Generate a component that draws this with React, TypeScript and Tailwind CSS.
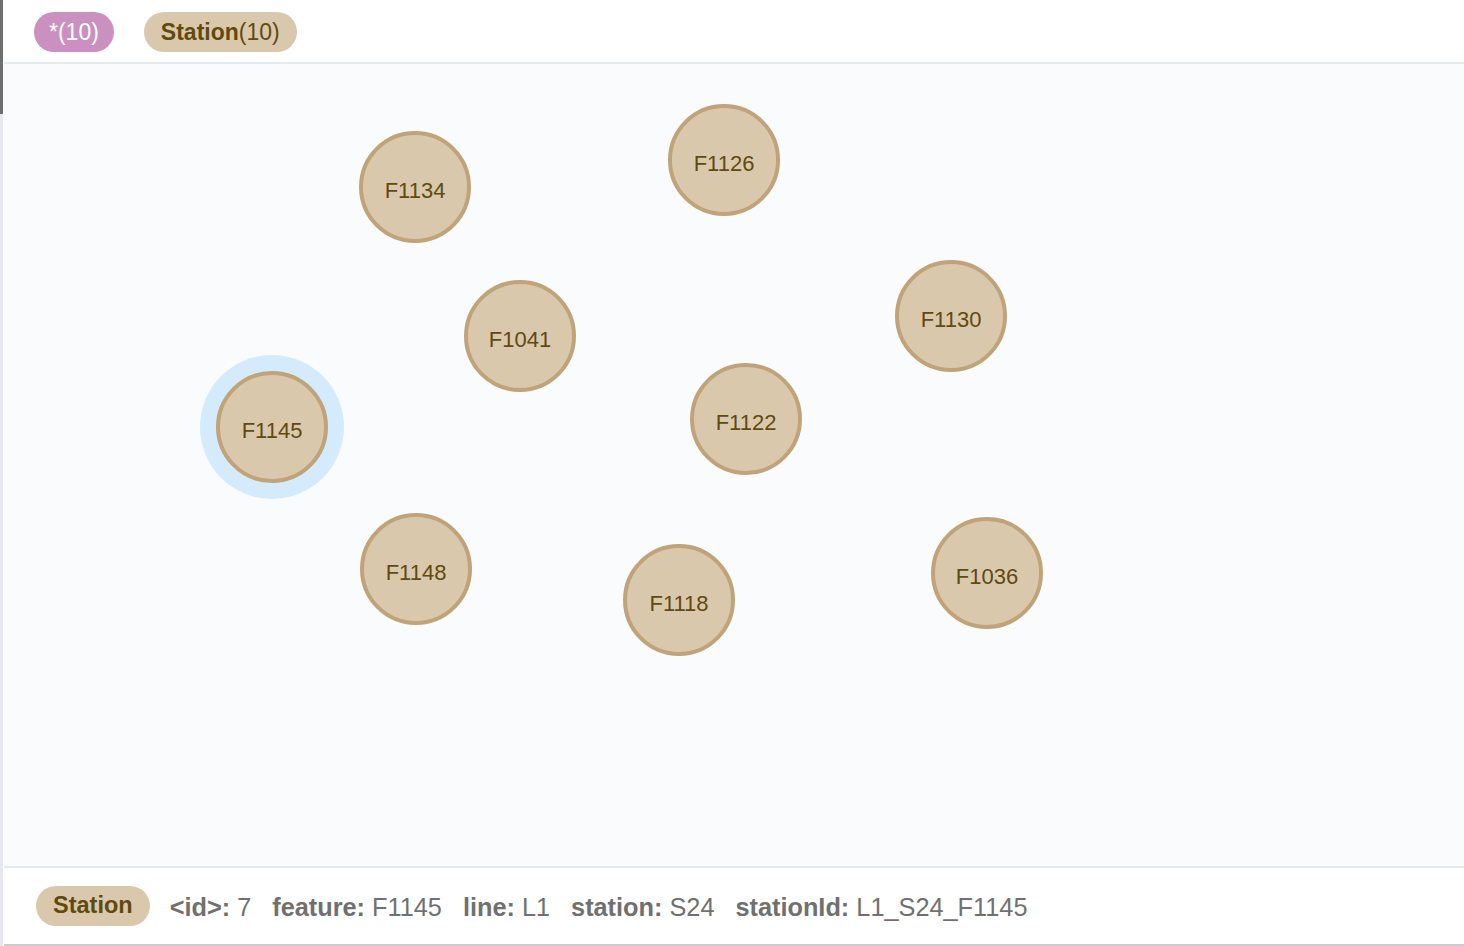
import React from "react";

const nodes = [
  { id: "F1134", x: 415, y: 187 },
  { id: "F1126", x: 724, y: 160 },
  { id: "F1041", x: 520, y: 336 },
  { id: "F1130", x: 951, y: 316 },
  { id: "F1145", x: 272, y: 427, selected: true },
  { id: "F1122", x: 746, y: 419 },
  { id: "F1148", x: 416, y: 569 },
  { id: "F1118", x: 679, y: 600 },
  { id: "F1036", x: 987, y: 573 },
];

const props: [string, string][] = [
  ["<id>:", "7"],
  ["feature:", "F1145"],
  ["line:", "L1"],
  ["station:", "S24"],
  ["stationId:", "L1_S24_F1145"],
];

export default function App() {
  const ox = 4;
  const oy = 64;
  return (
    <div
      className="flex h-[946px] w-[1464px] overflow-hidden bg-white"
      style={{ fontFamily: '"Liberation Sans", Arial, sans-serif' }}
    >
      <div className="flex w-[3px] flex-col bg-[#e7e8ef]">
        <div className="h-[114px] bg-[#6e6e6e]" />
      </div>
      <div className="w-px bg-white" />
      <div className="flex flex-1 flex-col">
        <div className="flex h-[64px] items-center gap-[30px] border-b-2 border-[#e6e9ee] pl-[30px] pt-[2px]">
          <div className="flex h-[40px] items-center rounded-full bg-[#c990c0] px-[15px] text-[23px] leading-none text-white">
            *(10)
          </div>
          <div className="flex h-[40px] items-center rounded-full bg-[#dac8ad] px-[17px] text-[23px] leading-none text-[#604a0e]">
            <span className="font-bold">Station</span>
            <span>(10)</span>
          </div>
        </div>
        <div className="relative flex-1 bg-[#f9fbfd]">
          <svg className="absolute inset-0 h-full w-full">
            {nodes.map((n) => (
              <g key={n.id} transform={`translate(${n.x - ox},${n.y - oy})`}>
                {n.selected && <circle r={72} fill="#d3ebfd" />}
                <circle r={54} fill="#dac8ad" stroke="#c0a378" strokeWidth={4} />
                <text
                  textAnchor="middle"
                  dominantBaseline="central"
                  y={3}
                  fontSize={22}
                  fill="#604a0e"
                  fontFamily='"Liberation Sans", Arial, sans-serif'
                >
                  {n.id}
                </text>
              </g>
            ))}
          </svg>
        </div>
        <div className="flex h-[78px] items-center border-t-2 border-[#e6e9ee] pl-[32px]">
          <div className="flex h-[40px] items-center rounded-full bg-[#dac8ad] px-[17px] text-[23.5px] font-bold leading-none text-[#604a0e]">
            Station
          </div>
          <div className="ml-[20px] flex items-center gap-[21px] pt-[3px] text-[25.3px] leading-none text-[#707070]">
            {props.map(([k, v]) => (
              <span key={k} className="whitespace-pre">
                <span className="font-bold">{k}</span> {v}
              </span>
            ))}
          </div>
        </div>
        <div className="h-[2px] bg-[#c9cdd1]" />
      </div>
    </div>
  );
}
